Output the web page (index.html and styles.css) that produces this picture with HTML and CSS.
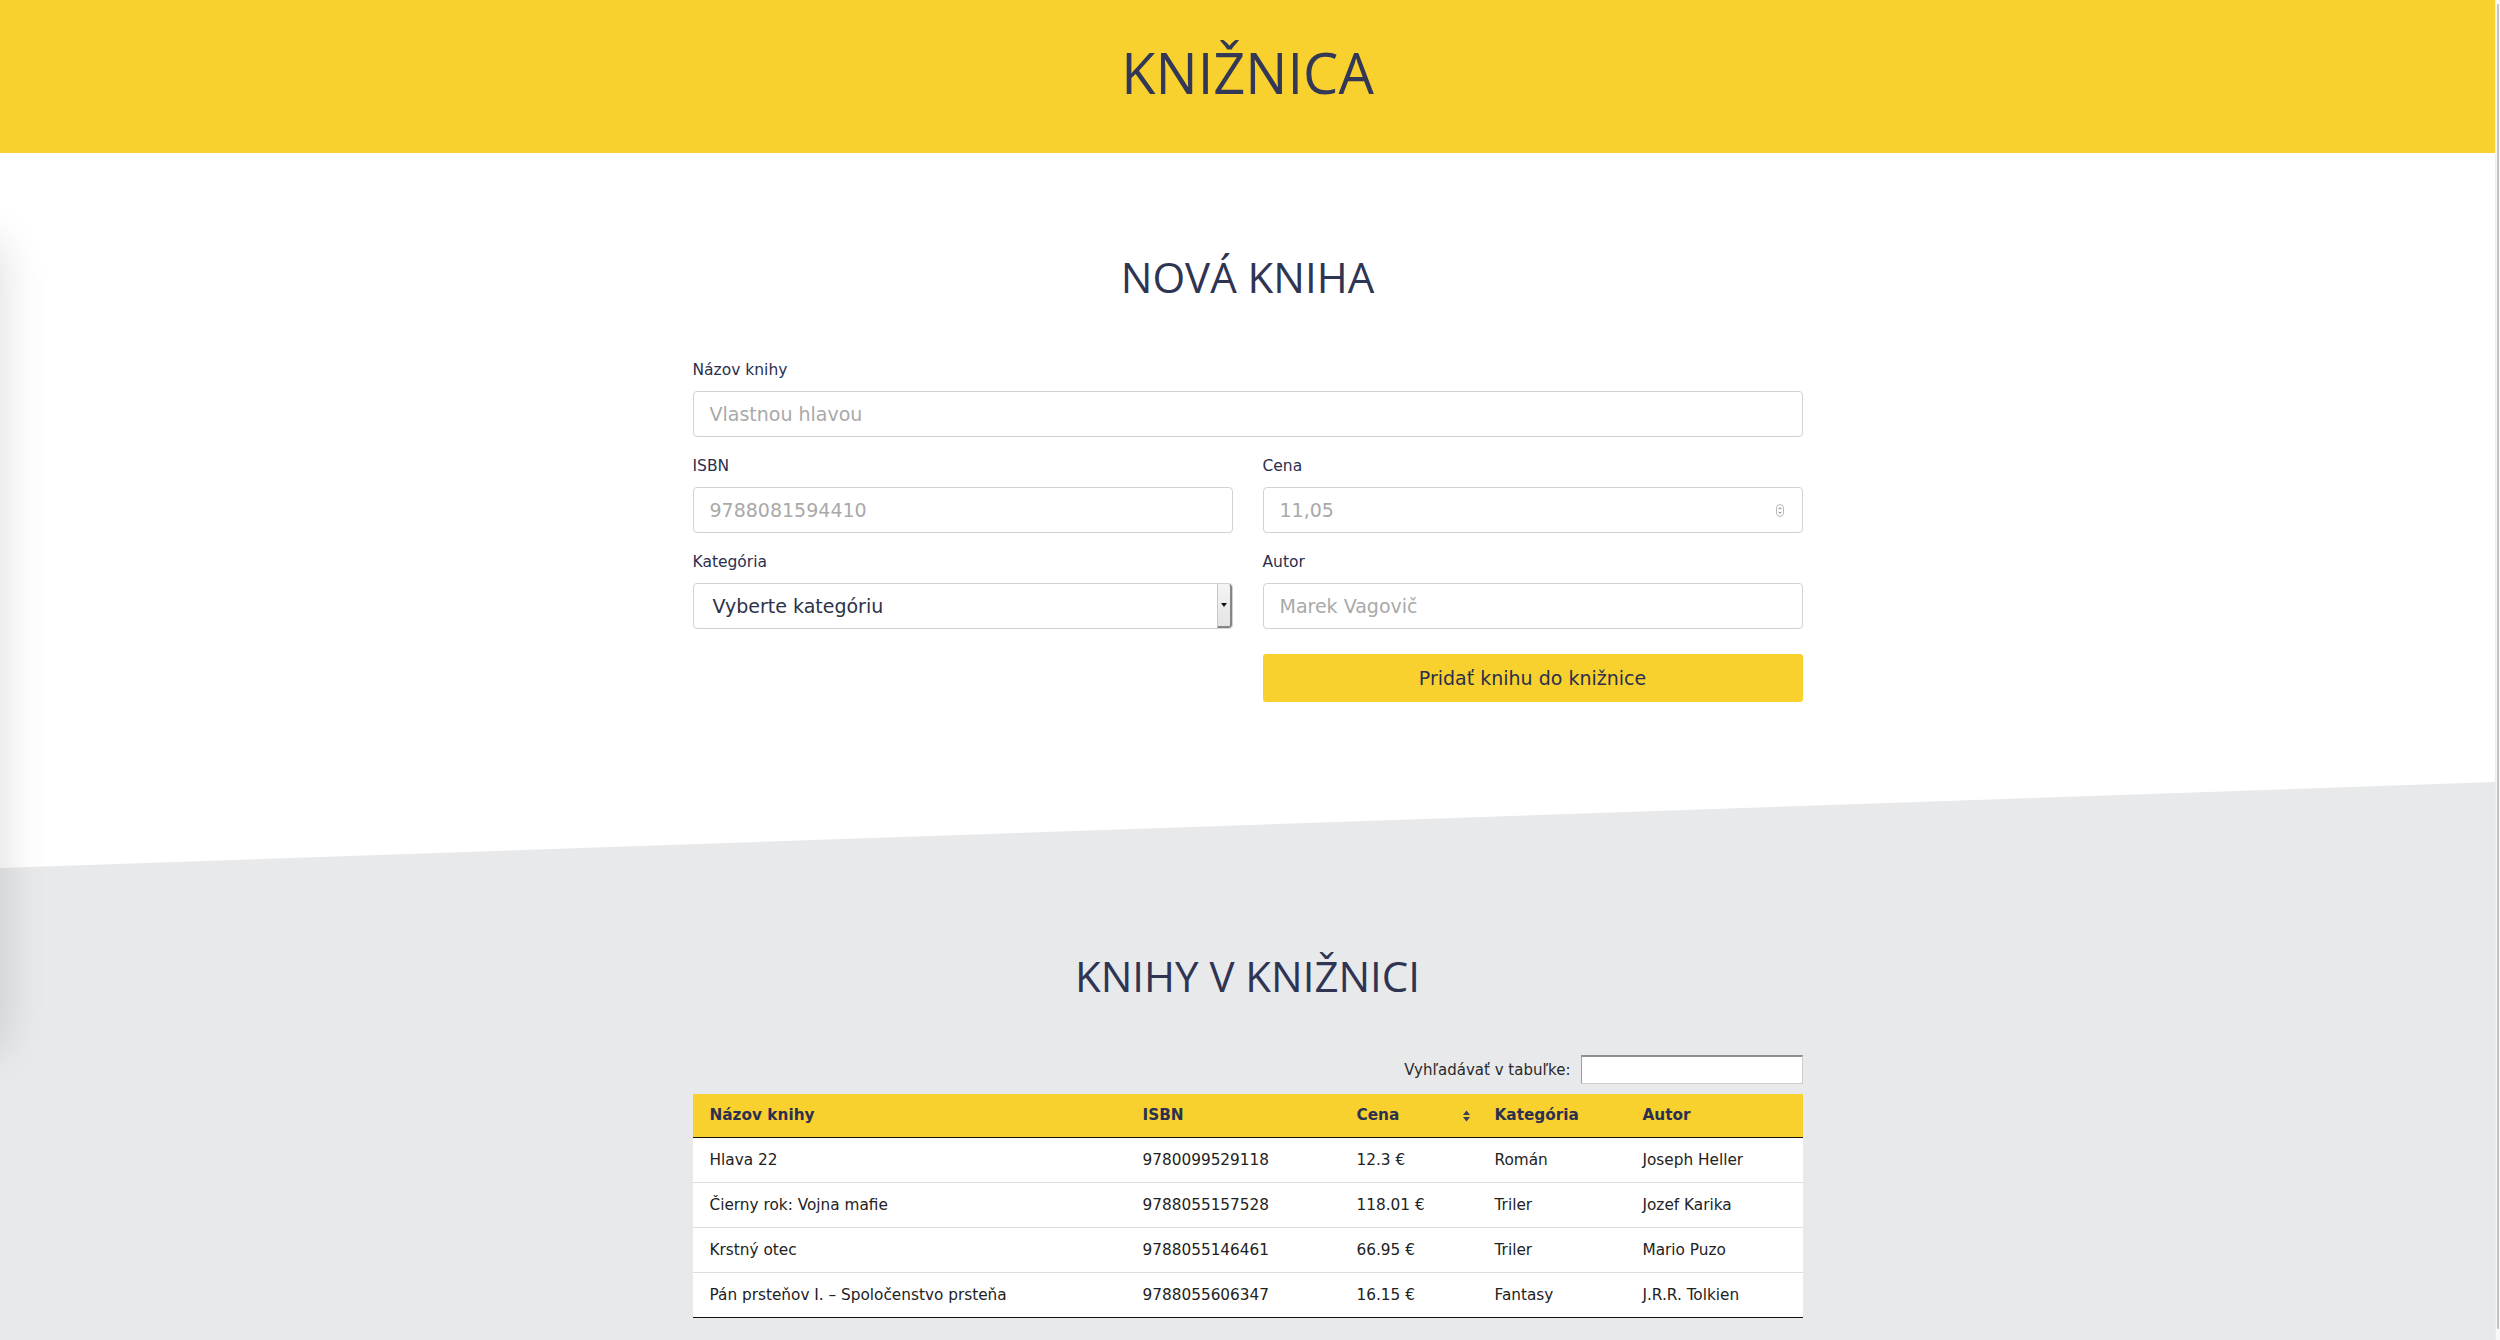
FILE: index.html
```html
<!DOCTYPE html>
<html lang="sk">
<head>
<meta charset="utf-8">
<title>Knižnica</title>
<link rel="stylesheet" href="styles.css">
</head>
<body>
<div class="page">
  <header class="site-header">
    <h1 class="site-title">KNIŽNICA</h1>
  </header>

  <section class="new-book">
    <div class="container">
      <h2 class="section-title">NOVÁ KNIHA</h2>
      <form class="book-form">
        <div class="form-group">
          <label class="form-label">Názov knihy</label>
          <input class="form-control" type="text" placeholder="Vlastnou hlavou">
        </div>
        <div class="form-grid">
          <div class="form-group">
            <label class="form-label">ISBN</label>
            <input class="form-control" type="text" placeholder="9788081594410">
          </div>
          <div class="form-group">
            <label class="form-label">Cena</label>
            <div class="number-box">
              <input class="number-input" type="text" placeholder="11,05">
              <svg class="spinner" width="8" height="13" viewBox="0 0 8 13"><rect x="0.5" y="0.5" width="7" height="12" rx="3.5" fill="#fff" stroke="#b9b9b9"/><path d="M2.6 5.2 L4 3.7 L5.4 5.2" fill="none" stroke="#6f6f6f" stroke-width="0.9"/><path d="M2.6 7.8 L4 9.3 L5.4 7.8" fill="none" stroke="#6f6f6f" stroke-width="0.9"/></svg>
            </div>
          </div>
          <div class="form-group">
            <label class="form-label">Kategória</label>
            <div class="select-box">
              <span class="select-text">Vyberte kategóriu</span>
              <span class="select-arrow"><svg width="6" height="4" viewBox="0 0 6 4"><path d="M0 0 H6 L3 4 Z" fill="#111"/></svg></span>
            </div>
          </div>
          <div class="form-group">
            <label class="form-label">Autor</label>
            <input class="form-control" type="text" placeholder="Marek Vagovič">
          </div>
          <button class="submit-btn" type="button">Pridať knihu do knižnice</button>
        </div>
      </form>
    </div>
  </section>

  <section class="library">
    <div class="container">
      <h2 class="section-title">KNIHY V KNIŽNICI</h2>
      <div class="table-search">
        <label class="search-label">Vyhľadávať v tabuľke:</label>
        <input class="search-input" type="text">
      </div>
      <table class="books-table">
        <colgroup>
          <col class="c-title"><col class="c-isbn"><col class="c-price"><col class="c-cat"><col class="c-author">
        </colgroup>
        <thead>
          <tr>
            <th>Názov knihy</th>
            <th>ISBN</th>
            <th class="sortable">Cena<svg class="sort-icon" width="7" height="12" viewBox="0 0 7 12"><path d="M0 5 L3.5 0.5 L7 5 Z" fill="#3a3f5c"/><path d="M0 7 L3.5 11.5 L7 7 Z" fill="#3a3f5c"/></svg></th>
            <th>Kategória</th>
            <th>Autor</th>
          </tr>
        </thead>
        <tbody>
          <tr><td>Hlava 22</td><td>9780099529118</td><td>12.3 €</td><td>Román</td><td>Joseph Heller</td></tr>
          <tr><td>Čierny rok: Vojna mafie</td><td>9788055157528</td><td>118.01 €</td><td>Triler</td><td>Jozef Karika</td></tr>
          <tr><td>Krstný otec</td><td>9788055146461</td><td>66.95 €</td><td>Triler</td><td>Mario Puzo</td></tr>
          <tr><td>Pán prsteňov I. – Spoločenstvo prsteňa</td><td>9788055606347</td><td>16.15 €</td><td>Fantasy</td><td>J.R.R. Tolkien</td></tr>
        </tbody>
      </table>
    </div>
  </section>
</div>
<div class="edge-shadow"></div>
<div class="scrollbar"><div class="scrollbar-thumb"></div></div>
</body>
</html>
```

FILE: styles.css
```css
* { box-sizing: border-box; }

html, body {
  margin: 0;
  padding: 0;
}

body {
  background: #ffffff;
  font-family: "DejaVu Sans", "Liberation Sans", sans-serif;
  color: #2c3150;
  overflow: hidden;
}

.page {
  width: calc(100% - 5px);
}

.container {
  width: 1110px;
  margin: 0 auto;
}

/* Header */
.site-header {
  background: #f9d12e;
  padding: 34px 0 43px;
  text-align: center;
}

.site-title {
  margin: 0;
  font-family: "Open Sans", "DejaVu Sans", sans-serif;
  font-weight: 400;
  font-size: 56px;
  line-height: 76px;
  color: #323856;
}

.section-title {
  margin: 0;
  text-align: center;
  font-family: "Open Sans", "DejaVu Sans", sans-serif;
  font-weight: 400;
  font-size: 42px;
  line-height: 57px;
  color: #2f3453;
}

/* New book form */
.new-book {
  padding: 95px 0 80px;
  background: #ffffff;
}

.new-book .section-title {
  margin-bottom: 54px;
}

.form-group {
  margin-bottom: 18px;
}

.form-label {
  display: block;
  font-size: 15.5px;
  line-height: 22px;
  margin-bottom: 10px;
  color: #2b2f4d;
}

.form-control,
.number-box,
.select-box {
  display: block;
  width: 100%;
  height: 46px;
  border: 1px solid #cfd2d8;
  border-radius: 4px;
  background: #ffffff;
}

.form-control {
  padding: 0 16px;
  font-family: "DejaVu Sans", sans-serif;
  font-size: 19px;
  color: #333;
  outline: none;
}

.form-control::placeholder,
.number-input::placeholder {
  color: #a9a9a9;
}

.number-box {
  display: flex;
  align-items: center;
}

.number-input {
  flex: 1;
  min-width: 0;
  height: 100%;
  border: none;
  background: transparent;
  padding: 0 16px;
  font-family: "DejaVu Sans", sans-serif;
  font-size: 19px;
  outline: none;
}

.spinner {
  flex: none;
  margin-right: 18px;
}

.select-box {
  display: flex;
  align-items: stretch;
  overflow: hidden;
}

.select-text {
  flex: 1;
  display: flex;
  align-items: center;
  padding-left: 19px;
  font-size: 19px;
  color: #2c3248;
}

.select-arrow {
  flex: none;
  width: 15px;
  display: flex;
  align-items: center;
  justify-content: center;
  background: linear-gradient(#f5f5f5, #e4e4e4);
  border-left: 1px solid #c8c8c8;
  border-right: 2px solid #858585;
  border-bottom: 2px solid #858585;
  border-top-right-radius: 3px;
  border-bottom-right-radius: 3px;
}

.form-grid {
  display: grid;
  grid-template-columns: 540px 540px;
  column-gap: 30px;
}

.submit-btn {
  grid-column: 2;
  height: 48px;
  margin-top: 7px;
  border: none;
  border-radius: 3px;
  background: #f9d12e;
  font-family: "DejaVu Sans", sans-serif;
  font-size: 19px;
  color: #2b2f4d;
  cursor: pointer;
}

/* Library */
.library {
  background: #e8e9eb;
  padding: 165px 0 22px;
  clip-path: polygon(0 86px, 100% 0, 100% 100%, 0 100%);
}

.library .section-title {
  margin-bottom: 51px;
}

.table-search {
  display: flex;
  justify-content: flex-end;
  align-items: center;
  gap: 10px;
  height: 29px;
  margin-bottom: 10px;
}

.search-label {
  font-size: 15px;
  color: #2a2a2a;
}

.search-input {
  width: 222px;
  height: 29px;
  background: #fff;
  border: 1px solid #cdcdcd;
  border-top: 2px solid #8f8f8f;
  border-left: 1px solid #9d9d9d;
  outline: none;
}

.books-table {
  width: 100%;
  table-layout: fixed;
  border-collapse: collapse;
  font-size: 15.3px;
}

.c-title { width: 433px; }
.c-isbn { width: 214px; }
.c-price { width: 138px; }
.c-cat { width: 148px; }
.c-author { width: 177px; }

.books-table th {
  background: #f9d12e;
  text-align: left;
  font-weight: 700;
  color: #2b3050;
  padding: 10px 17px;
  line-height: 23px;
  border-bottom: 1px solid #111;
}

.books-table th.sortable {
  padding-right: 8px;
}

.sort-icon {
  float: right;
  margin-top: 6px;
}

.books-table td {
  background: #ffffff;
  color: #222;
  padding: 11px 17px;
  line-height: 22px;
  border-bottom: 1px solid #dddddd;
  white-space: nowrap;
}

.books-table tbody tr:last-child td {
  border-bottom: 1px solid #111;
}

/* Overlay decorations */
.edge-shadow {
  position: fixed;
  left: -44px;
  top: 240px;
  width: 44px;
  height: 810px;
  border-radius: 40px;
  box-shadow: 0 0 44px 4px rgba(0, 0, 0, 0.13);
}

.scrollbar {
  position: fixed;
  top: 0;
  right: 0;
  width: 5px;
  height: 100%;
  background: #f8f8f8;
  border-left: 1px solid #ededed;
}

.scrollbar-thumb {
  margin: 4px 0 0 1px;
  width: 2px;
  height: 1325px;
  border-radius: 1px;
  background: #c3c3c3;
}
```
